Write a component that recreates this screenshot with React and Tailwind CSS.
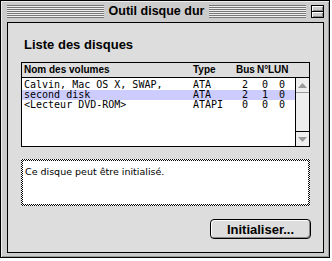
export default function App() {
  const rows = [
    { name: 'Calvin, Mac OS X, SWAP,', type: 'ATA', bus: '2', id: '0', lun: '0' },
    { name: 'second disk', type: 'ATA', bus: '2', id: '1', lun: '0', sel: true },
    { name: '<Lecteur DVD-ROM>', type: 'ATAPI', bus: '0', id: '0', lun: '0' },
  ];

  const stripes =
    'flex-1 h-[13px] bg-[image:repeating-linear-gradient(to_bottom,#777_0px,#777_1px,#eeeeee_1px,#eeeeee_2px)]';
  const cols = 'grid grid-cols-[169px_43px_21px_11px_24px]';

  return (
    <div className="w-[332px] h-[261px] bg-white">
      <div className="w-[330px] h-[258px] border border-black bg-[#cccccc] flex flex-col shadow-[inset_1px_1px_0_#eeeeee,inset_-1px_-1px_0_#999]">
        {/* title bar */}
        <div className="h-[21px] shrink-0 flex items-center pl-[6px] pr-[5px] gap-[5px]">
          <div className={stripes} />
          <span className="font-['Liberation_Sans',sans-serif] font-bold text-[12.5px] leading-none text-black">
            Outil disque dur
          </span>
          <div className={stripes} />
          <div className="w-[13px] h-[13px] border border-black flex flex-col bg-[#cccccc]">
            <div className="h-[5px] shadow-[inset_1px_1px_0_#fff,inset_-1px_-1px_0_#888]" />
            <div className="h-px bg-black" />
            <div className="h-[5px] shadow-[inset_1px_1px_0_#fff,inset_-1px_-1px_0_#888]" />
          </div>
        </div>

        {/* content */}
        <div className="ml-[6px] mr-[5px] mb-[4px] flex-1 border border-black bg-[#dddddd] flex flex-col">
          <div className="pt-[14px] pl-[16px] font-['Liberation_Sans',sans-serif] font-bold text-[13px] leading-[16px] text-black">
            Liste des disques
          </div>

          {/* list */}
          <div className="mt-[9px] mx-[13px] h-[85px] border border-black bg-white flex flex-col">
            <div className={`${cols} h-[15px] shrink-0 items-center pl-[2px] border-b border-black bg-[#dddddd] font-['Liberation_Sans',sans-serif] font-bold text-[10px] leading-none text-black`}>
              <span>Nom des volumes</span>
              <span>Type</span>
              <span>Bus</span>
              <span className="whitespace-nowrap">N°</span>
              <span>LUN</span>
            </div>
            <div className="flex-1 flex">
              <div className="flex-1 pt-[2px] font-['DejaVu_Sans_Mono',monospace] text-[10px] leading-[10px] text-black">
                {rows.map((r) => (
                  <div
                    key={r.name}
                    className={`${cols} h-[10px] pl-[2px] items-center ${r.sel ? 'bg-[#ccccff]' : ''}`}
                  >
                    <span className="whitespace-nowrap">{r.name}</span>
                    <span>{r.type}</span>
                    <span className="pl-[6px]">{r.bus}</span>
                    <span className="pl-[5px]">{r.id}</span>
                    <span className="pl-[11px]">{r.lun}</span>
                  </div>
                ))}
              </div>
              {/* scrollbar */}
              <div className="w-[14px] border-l border-black bg-[#eeeeee] flex flex-col justify-between">
                <div className="h-[15px] border-b border-[#999] flex items-center justify-center">
                  <svg width="9" height="5" viewBox="0 0 9 5">
                    <path d="M0 5 L4.5 0 L9 5 Z" fill="#999" />
                  </svg>
                </div>
                <div className="h-[15px] border-t border-black flex items-center justify-center">
                  <svg width="9" height="5" viewBox="0 0 9 5">
                    <path d="M0 0 L4.5 5 L9 0 Z" fill="#999" />
                  </svg>
                </div>
              </div>
            </div>
          </div>

          {/* info box */}
          <div className="mt-[12px] mx-[13px] h-[47px] p-[2px] bg-[image:repeating-conic-gradient(#000_0%_25%,#fff_0%_50%)] bg-[length:2px_2px]">
            <div className="h-full bg-white pl-[2px] pt-[5px] font-['DejaVu_Sans',sans-serif] text-[9.5px] leading-[12px] text-black">
              Ce disque peut être initialisé.
            </div>
          </div>

          {/* button */}
          <div className="mt-[13px] mr-[12px] flex justify-end">
            <button className="w-[101px] h-[20px] rounded-[4px] border border-black bg-[#dddddd] shadow-[inset_1px_1px_0_#fff,inset_-1px_-1px_0_#888] font-['Liberation_Sans',sans-serif] font-bold text-[13px] leading-none text-black">
              Initialiser...
            </button>
          </div>
        </div>
      </div>
    </div>
  );
}
